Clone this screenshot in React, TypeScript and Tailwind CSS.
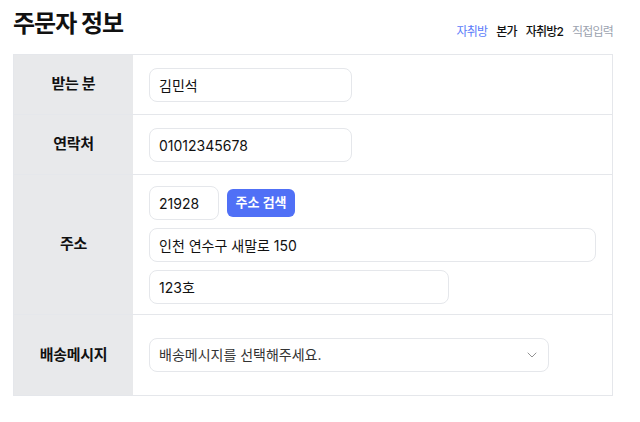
import { ChevronDown } from "lucide-react";

const presets = [
  { name: "자취방", tone: "text-[#5b7cfa]" },
  { name: "본가", tone: "font-medium text-[#111]" },
  { name: "자취방2", tone: "font-medium text-[#111]" },
  { name: "직접입력", tone: "text-[#9ca3af]" },
];

function Field({ value, className = "" }: { value: string; className?: string }) {
  return (
    <input
      readOnly
      value={value}
      className={`h-[34px] rounded-lg border border-[#e5e7eb] bg-white px-[9px] text-sm text-[#111] outline-none ${className}`}
    />
  );
}

function Row({ label, children, pad }: { label: string; children: React.ReactNode; pad: string }) {
  return (
    <div className="grid grid-cols-[119px_1fr] border-t border-[#e5e7eb] first:border-t-0">
      <div className="flex items-center justify-center bg-[#e8e9eb] text-[15px] font-bold tracking-[-0.3px] text-[#111]">
        {label}
      </div>
      <div className={`pl-4 pr-4 ${pad}`}>{children}</div>
    </div>
  );
}

export default function App() {
  return (
    <div
      className="min-h-screen bg-white px-[13px] pt-2"
      style={{ fontFamily: 'Inter, "Noto Sans CJK KR", sans-serif' }}
    >
      <div className="flex w-[600px] items-end justify-between">
        <h1 className="text-2xl leading-8 font-bold tracking-[-1px] text-[#111]">주문자 정보</h1>
        <div className="flex gap-[9px] text-xs leading-4 tracking-[-0.8px]">
          {presets.map((p) => (
            <span key={p.name} className={p.tone}>
              {p.name}
            </span>
          ))}
        </div>
      </div>

      <div className="mt-[14px] w-[600px] border border-[#e5e7eb]">
        <Row label="받는 분" pad="pt-[13px] pb-3">
          <Field value="김민석" className="w-[203px]" />
        </Row>
        <Row label="연락처" pad="pt-[13px] pb-3">
          <Field value="01012345678" className="w-[203px]" />
        </Row>
        <Row label="주소" pad="pt-[11px] pb-[10px]">
          <div className="flex flex-col gap-2">
            <div className="flex items-center gap-2">
              <Field value="21928" className="w-[70px]" />
              <button className="h-[28px] w-[68px] rounded-md bg-[#5070f6] text-[13px] font-semibold text-white">
                주소 검색
              </button>
            </div>
            <Field value="인천 연수구 새말로 150" className="w-full" />
            <Field value="123호" className="w-[300px]" />
          </div>
        </Row>
        <Row label="배송메시지" pad="py-[23px]">
          <div className="flex h-[34px] w-[400px] items-center justify-between rounded-lg border border-[#e5e7eb] pl-[9px] pr-[8px] text-sm text-[#333]">
            <span>배송메시지를 선택해주세요.</span>
            <ChevronDown className="h-4 w-4 text-[#777]" strokeWidth={1.2} />
          </div>
        </Row>
      </div>
    </div>
  );
}
